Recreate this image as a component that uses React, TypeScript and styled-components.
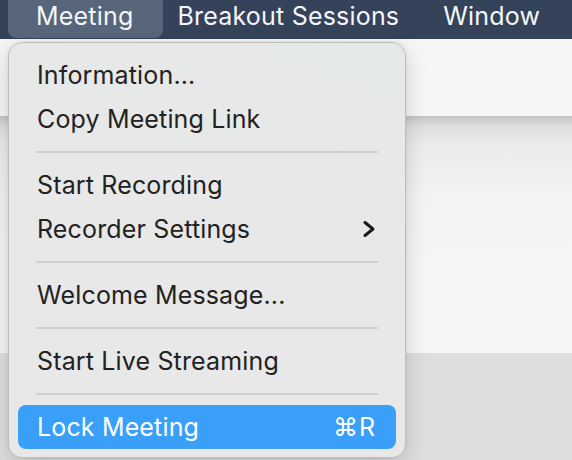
import { createGlobalStyle } from "styled-components";
import styled from "styled-components";

const GlobalStyle = createGlobalStyle`
  html, body {
    margin: 0;
    padding: 0;
    width: 572px;
    height: 460px;
    overflow: hidden;
    background: #dedede;
  }
  * { box-sizing: border-box; }
`;

const FONT = `Inter, "DejaVu Sans", "Noto Sans", sans-serif`;

type Entry =
  | { kind: "item"; label: string; shortcut?: string; submenu?: boolean; selected?: boolean }
  | { kind: "sep" };

const entries: Entry[] = [
  { kind: "item", label: "Information..." },
  { kind: "item", label: "Copy Meeting Link" },
  { kind: "sep" },
  { kind: "item", label: "Start Recording" },
  { kind: "item", label: "Recorder Settings", submenu: true },
  { kind: "sep" },
  { kind: "item", label: "Welcome Message..." },
  { kind: "sep" },
  { kind: "item", label: "Start Live Streaming" },
  { kind: "sep" },
  { kind: "item", label: "Lock Meeting", shortcut: "⌘R", selected: true },
];

const Screen = styled.div`
  position: relative;
  width: 572px;
  height: 460px;
  font-family: ${FONT};
  overflow: hidden;
`;

const MenuBar = styled.div`
  display: flex;
  align-items: flex-start;
  height: 39px;
  padding-left: 14px;
  background: #34435a;
`;

const MenuTitle = styled.div<{ $active?: boolean }>`
  height: ${(p) => (p.$active ? "38px" : "39px")};
  line-height: 32px;
  font-size: 25px;
  letter-spacing: 0.2px;
  color: #f4f6f9;
  padding: ${(p) => (p.$active ? "0 30px 0 28px" : "0 22px")};
  margin: ${(p) => (p.$active ? "0 -8px 0 -6px" : "0")};
  background: ${(p) => (p.$active ? "#57667b" : "transparent")};
  border-radius: 0 0 8px 8px;
  white-space: nowrap;
`;

const Toolbar = styled.div`
  height: 77px;
  background: #f6f6f6;
`;

const Panel = styled.div`
  height: 237px;
  background: linear-gradient(#c4c4c4 0px, #dedede 10px, #ebebeb 28px, #f3f3f3 80px, #f6f6f6 160px);
`;

const Footer = styled.div`
  height: 107px;
  background: #dedede;
`;

const Menu = styled.div`
  position: absolute;
  left: 8px;
  top: 42px;
  width: 398px;
  height: 416px;
  padding: 10px 0 8px;
  background: linear-gradient(200deg, #e5e8ea 0%, #e8e8e8 35%, #e8e8e8 100%);
  border: 1px solid #bdbdbd;
  border-radius: 14px;
  box-shadow: 0 6px 22px rgba(0, 0, 0, 0.16), 0 0 3px rgba(0, 0, 0, 0.08);
  display: flex;
  flex-direction: column;
`;

const Row = styled.div<{ $selected?: boolean }>`
  display: flex;
  align-items: center;
  justify-content: space-between;
  height: 44px;
  margin: 0 9px;
  padding: 0 20px 0 19px;
  border-radius: 8px;
  background: ${(p) => (p.$selected ? "#3a9ff9" : "transparent")};
  color: ${(p) => (p.$selected ? "#ffffff" : "#222222")};
  font-size: 25px;
  letter-spacing: 0.15px;
  line-height: 44px;
  white-space: nowrap;
`;

const Shortcut = styled.span`
  font-family: ${FONT};
  letter-spacing: 1px;
`;

const Separator = styled.div`
  height: 22px;
  margin: 0 27px;
  display: flex;
  align-items: center;

  &::after {
    content: "";
    flex: 1;
    height: 2px;
    background: #cfcfcf;
  }
`;

const Chevron = () => (
  <svg width="14" height="18" viewBox="0 0 14 18">
    <polyline
      points="3,2.5 11,9 3,15.5"
      fill="none"
      stroke="#1a1a1a"
      strokeWidth="3"
      strokeLinecap="round"
      strokeLinejoin="round"
    />
  </svg>
);

export default function App() {
  return (
    <>
      <GlobalStyle />
      <Screen>
        <MenuBar>
          <MenuTitle $active>Meeting</MenuTitle>
          <MenuTitle>Breakout Sessions</MenuTitle>
          <MenuTitle>Window</MenuTitle>
        </MenuBar>
        <Toolbar />
        <Panel />
        <Footer />

        <Menu>
          {entries.map((e, i) =>
            e.kind === "sep" ? (
              <Separator key={i} />
            ) : (
              <Row key={i} $selected={e.selected}>
                <span>{e.label}</span>
                {e.submenu && <Chevron />}
                {e.shortcut && <Shortcut>{e.shortcut}</Shortcut>}
              </Row>
            )
          )}
        </Menu>
      </Screen>
    </>
  );
}
